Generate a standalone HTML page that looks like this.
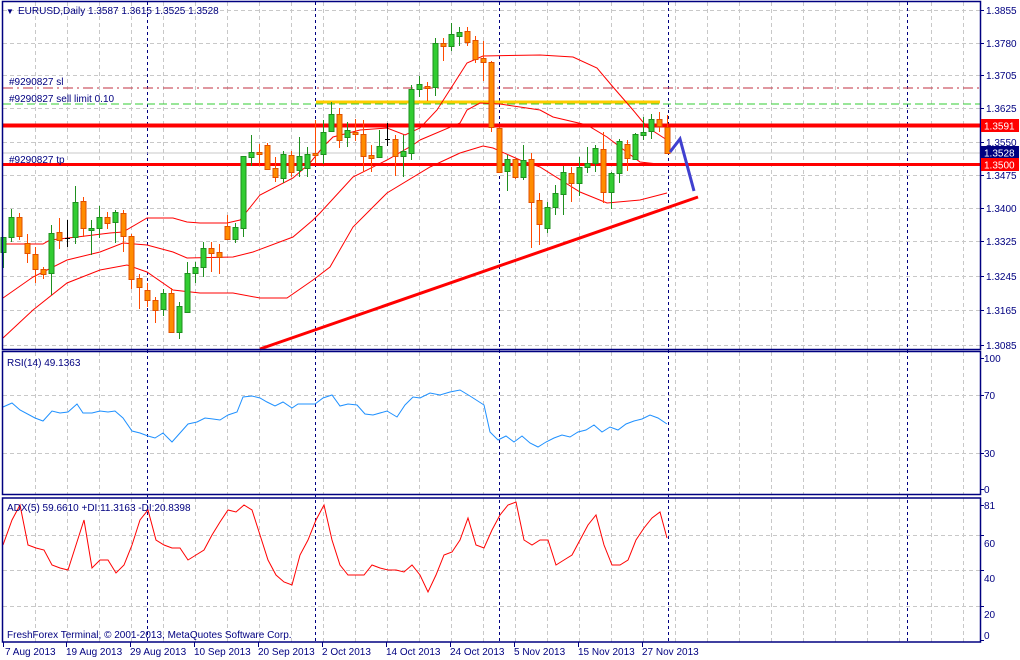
<!DOCTYPE html>
<html><head><meta charset="utf-8"><style>
html,body{margin:0;padding:0;background:#fff;width:1020px;height:660px;overflow:hidden}
svg{display:block;font-family:"Liberation Sans",Arial,sans-serif}
text{font-size:10px}
</style></head><body>
<svg id="s" width="1020" height="660" viewBox="0 0 1020 660" xmlns="http://www.w3.org/2000/svg">
<rect width="1020" height="660" fill="#fff"/>
<g id="grid" stroke="#c8c8c8" stroke-width="1" stroke-dasharray="4,3" fill="none"></g>
<g id="vsep" stroke="#000080" stroke-width="1" stroke-dasharray="3,3" fill="none"></g>
<line x1="3" y1="88" x2="980" y2="88" stroke="#c03040" stroke-width="1" stroke-dasharray="10,4,2,4"/>
<line x1="3" y1="104" x2="980" y2="104" stroke="#33cc33" stroke-width="1" stroke-dasharray="8,4"/>
<line x1="3" y1="153" x2="980" y2="153" stroke="#c8c8c8" stroke-width="1"/>
<line x1="316" y1="102" x2="660" y2="102" stroke="#ffcc00" stroke-width="3"/>
<line x1="3" y1="125.5" x2="980" y2="125.5" stroke="#ff0000" stroke-width="4"/>
<line x1="3" y1="164.5" x2="980" y2="164.5" stroke="#ff0000" stroke-width="3"/>
<g fill="none" stroke="#ff0000" stroke-width="1">
<polyline points="3,244 43,244 50,240 77,237 110,233 123,232 147,218 173,218 187,222 200,223 227,223 240,220 260,195 293,178 310,163 323,147 333,137 360,130 387,128 405,135 420,128 437,110 453,85 467,63 483,56 540,55 573,57 597,68 613,87 633,110 647,127 667,140"/>
<polyline points="3,298 33,277 67,260 100,252 123,243 147,245 173,252 187,258 233,257 253,252 293,237 313,220 320,213 353,177 387,160 413,145 420,140 460,123 467,110 480,103 500,104 520,107 540,110 553,117 587,125 607,137 620,147 640,162 667,165"/>
<polyline points="3,338 33,310 67,283 100,270 127,265 147,272 173,290 200,293 233,293 260,298 287,298 313,280 330,267 353,227 387,193 430,167 460,153 483,146 493,148 520,160 540,167 580,192 607,203 640,200 667,193"/>
</g>
<g id="candles"></g>
<line x1="260" y1="349" x2="698" y2="197" stroke="#ff0000" stroke-width="3"/>
<polyline points="670,152 680,139 694,191" fill="none" stroke="#4040d0" stroke-width="3"/>
<polyline fill="none" stroke="#1e90ff" stroke-width="1" points="3,407 12,403 20,410 35,418 43,421 52,411 60,413 68,412 77,404 83,413 92,413 100,411 108,412 115,411 123,418 132,431 140,433 148,436 155,438 163,433 172,442 180,433 188,424 197,422 205,418 213,419 220,420 228,415 237,412 243,397 252,396 260,398 267,402 275,406 283,402 292,408 298,404 315,404 323,398 332,395 340,406 348,404 357,405 365,414 373,415 387,411 397,417 405,405 413,397 420,398 430,393 440,395 450,392 460,390 470,396 484,405 490,432 498,440 506,436 514,442 522,436 530,443 538,447 546,442 554,438 562,435 570,437 578,432 586,430 594,425 602,432 610,427 618,430 626,424 634,421 642,419 650,415 658,418 667,424"/>
<polyline fill="none" stroke="#ff0000" stroke-width="1" points="3,545 12,520 20,505 28,545 36,548 44,550 52,565 60,568 68,570 76,545 84,520 92,568 100,560 108,560 116,573 124,565 132,545 140,520 148,510 156,540 164,545 172,548 180,548 188,560 196,555 204,550 212,535 220,522 228,510 236,512 244,505 252,510 260,535 268,560 276,575 284,582 292,585 300,555 308,540 316,520 324,505 332,540 340,565 348,575 356,575 364,575 372,565 380,568 388,570 396,570 404,572 412,565 420,575 428,592 436,575 444,555 452,552 460,540 468,518 476,545 484,548 492,530 500,515 508,505 516,502 524,540 532,545 540,540 548,540 556,565 564,560 572,555 580,540 588,525 596,515 604,545 612,565 620,565 628,560 636,540 644,528 652,518 660,512 667,538"/>
<g fill="none" stroke="#000080" stroke-width="1.5">
<rect x="2.5" y="1.5" width="978" height="348"/>
<rect x="2.5" y="351.5" width="978" height="143"/>
<rect x="2.5" y="498" width="978" height="144"/>
</g>
<g id="ticks" stroke="#000080" stroke-width="1"></g>
<g fill="#000080">
<text x="6" y="14" style="font-size:8px">&#9660;</text>
<text x="18" y="14">EURUSD,Daily  1.3587 1.3615 1.3525 1.3528</text>
<text x="9" y="85">#9290827 sl</text>
<text x="9" y="102">#9290827 sell limit 0.10</text>
<text x="9" y="163">#9290827 tp</text>
<text x="7" y="366">RSI(14) 49.1363</text>
<text x="7" y="511">ADX(5) 59.6610 +DI:11.3163 -DI:20.8398</text>
<text x="7" y="638">FreshForex Terminal, © 2001-2013, MetaQuotes Software Corp.</text>
</g>
<g fill="#000080">
<text x="986" y="14">1.3855</text>
<text x="986" y="47">1.3780</text>
<text x="986" y="79">1.3705</text>
<text x="986" y="112">1.3625</text>
<text x="986" y="146">1.3550</text>
<text x="986" y="179">1.3475</text>
<text x="986" y="212">1.3400</text>
<text x="986" y="245">1.3325</text>
<text x="986" y="280">1.3245</text>
<text x="986" y="314">1.3165</text>
<text x="986" y="349">1.3085</text>
<text x="984" y="362">100</text>
<text x="984" y="399">70</text>
<text x="984" y="457">30</text>
<text x="984" y="493">0</text>
<text x="984" y="509">81</text>
<text x="984" y="547">60</text>
<text x="984" y="582">40</text>
<text x="984" y="618">20</text>
<text x="984" y="639">0</text>
</g>
<rect x="981" y="119" width="38" height="13" fill="#ff0000"/>
<text x="984" y="129.5" fill="#fff">1.3591</text>
<rect x="981" y="146" width="38" height="13" fill="#000080"/>
<text x="984" y="156.5" fill="#fff">1.3528</text>
<rect x="981" y="158" width="38" height="13" fill="#ff0000"/>
<text x="984" y="168.5" fill="#fff">1.3500</text>
<g fill="#000080">
<text x="5" y="655">7 Aug 2013</text>
<text x="66" y="655">19 Aug 2013</text>
<text x="130" y="655">29 Aug 2013</text>
<text x="194" y="655">10 Sep 2013</text>
<text x="258" y="655">20 Sep 2013</text>
<text x="322" y="655">2 Oct 2013</text>
<text x="386" y="655">14 Oct 2013</text>
<text x="450" y="655">24 Oct 2013</text>
<text x="514" y="655">5 Nov 2013</text>
<text x="578" y="655">15 Nov 2013</text>
<text x="642" y="655">27 Nov 2013</text>
</g>
</svg>
<script>
(function(){
var NS="http://www.w3.org/2000/svg";
function el(p,t,a){var e=document.createElementNS(NS,t);for(var k in a)e.setAttribute(k,a[k]);p.appendChild(e);return e;}
var g=document.getElementById('grid');
var hy=[10,43,75,108,142,175,208,241,276,310,345];
hy.forEach(function(y){el(g,'line',{x1:3,y1:y+.5,x2:980,y2:y+.5});});
[395,453].forEach(function(y){el(g,'line',{x1:3,y1:y+.5,x2:980,y2:y+.5});});
[535,570,606].forEach(function(y){el(g,'line',{x1:3,y1:y+.5,x2:980,y2:y+.5});});
for(var x=35;x<980;x+=32){
 el(g,'line',{x1:x+.5,y1:2,x2:x+.5,y2:349});
 el(g,'line',{x1:x+.5,y1:352,x2:x+.5,y2:494});
 el(g,'line',{x1:x+.5,y1:498,x2:x+.5,y2:642});
}
var v=document.getElementById('vsep');
[147,315,499,668,907].forEach(function(x){el(v,'line',{x1:x+.5,y1:2,x2:x+.5,y2:642});});
var t=document.getElementById('ticks');
hy.forEach(function(y){el(t,'line',{x1:980,y1:y+.5,x2:984,y2:y+.5});});
[358,395,453,489,505,535,570,606,640].forEach(function(y){el(t,'line',{x1:980,y1:y+.5,x2:984,y2:y+.5});});
[3,66,130,194,258,322,386,450,514,578,642].forEach(function(x){el(t,'line',{x1:x+.5,y1:642,x2:x+.5,y2:647});});
var C=[
['g',237,252,237,268],['g',217,237,209,242],['o',217,236,213,240],['o',243,253,234,263],['o',254,269,247,283],
['o',269,274,267,279],['g',233,273,225,295],['o',232,240,218,249],['d',238,238,220,247],['g',202,237,186,244],
['o',201,228,197,237],['g',228,229,220,255],['g',217,228,206,238],['o',217,223,212,229],['g',212,222,210,243],
['o',213,236,210,252],['o',236,279,234,289],['o',278,287,274,309],['o',290,300,283,307],['o',300,310,297,323],
['g',293,309,289,316],['o',293,332,288,332],['g',306,332,302,339],['g',273,312,262,312],['g',267,273,262,283],
['g',248,267,242,277],['o',248,253,242,272],['o',252,257,244,274],['o',226,239,215,239],['g',227,239,223,243],
['g',156,228,156,237],['g',152,157,135,166],['o',152,154,144,166],['o',145,169,143,169],['o',168,177,157,182],
['g',154,178,151,183],['o',155,172,151,177],['g',156,170,137,177],['g',154,168,147,177],['o',153,155,120,163],
['g',132,154,120,164],['g',114,131,102,132],['o',114,140,108,148],['g',130,137,122,147],['o',132,133,119,141],
['o',134,156,120,172],['o',155,158,145,172],['g',146,157,130,158],['d',139,139,123,146],['o',139,156,135,176],
['g',151,156,135,177],['g',89,153,85,160],['g',84,89,76,97],['o',86,87,82,101],['g',43,87,38,96],
['o',43,46,38,61],['g',34,46,23,51],['g',32,36,27,46],['o',31,42,27,46],['o',40,59,36,63],
['o',58,62,41,81],['o',62,127,61,132],['o',128,172,127,172],['g',159,171,155,191],['o',159,177,159,179],
['g',160,177,145,180],['o',159,202,153,248],['o',200,224,193,245],['g',207,228,202,233],['g',193,207,185,215],
['g',172,194,166,215],['o',173,183,167,202],['g',167,183,157,196],['g',163,167,147,173],['g',148,163,145,172],
['o',149,192,132,203],['g',173,192,172,209],['g',141,173,139,183],['o',144,158,140,171],['g',134,159,133,160],
['g',132,135,117,140],['g',119,131,114,139],['o',119,126,112,132],['o',127,153,115,154]
];
var cg=document.getElementById('candles');
C.forEach(function(c,i){
 var x=3+8*i;
 var wc=c[0]=='g'?'#1f8f1f':(c[0]=='o'?'#ff4a00':'#000');
 el(cg,'line',{x1:x+.5,y1:c[3],x2:x+.5,y2:c[4],stroke:wc,'stroke-width':1});
 if(c[0]=='d'){el(cg,'line',{x1:x-2,y1:c[1]+.5,x2:x+3,y2:c[1]+.5,stroke:'#000','stroke-width':1});return;}
 var h=Math.max(c[2]-c[1],2);
 el(cg,'rect',{x:x-2,y:c[1]+.5,width:5,height:h,fill:c[0]=='g'?'#32cd32':'#ff8c00',stroke:c[0]=='g'?'#1f8f1f':'#e05000','stroke-width':1});
});
})();
</script>
</body></html>
